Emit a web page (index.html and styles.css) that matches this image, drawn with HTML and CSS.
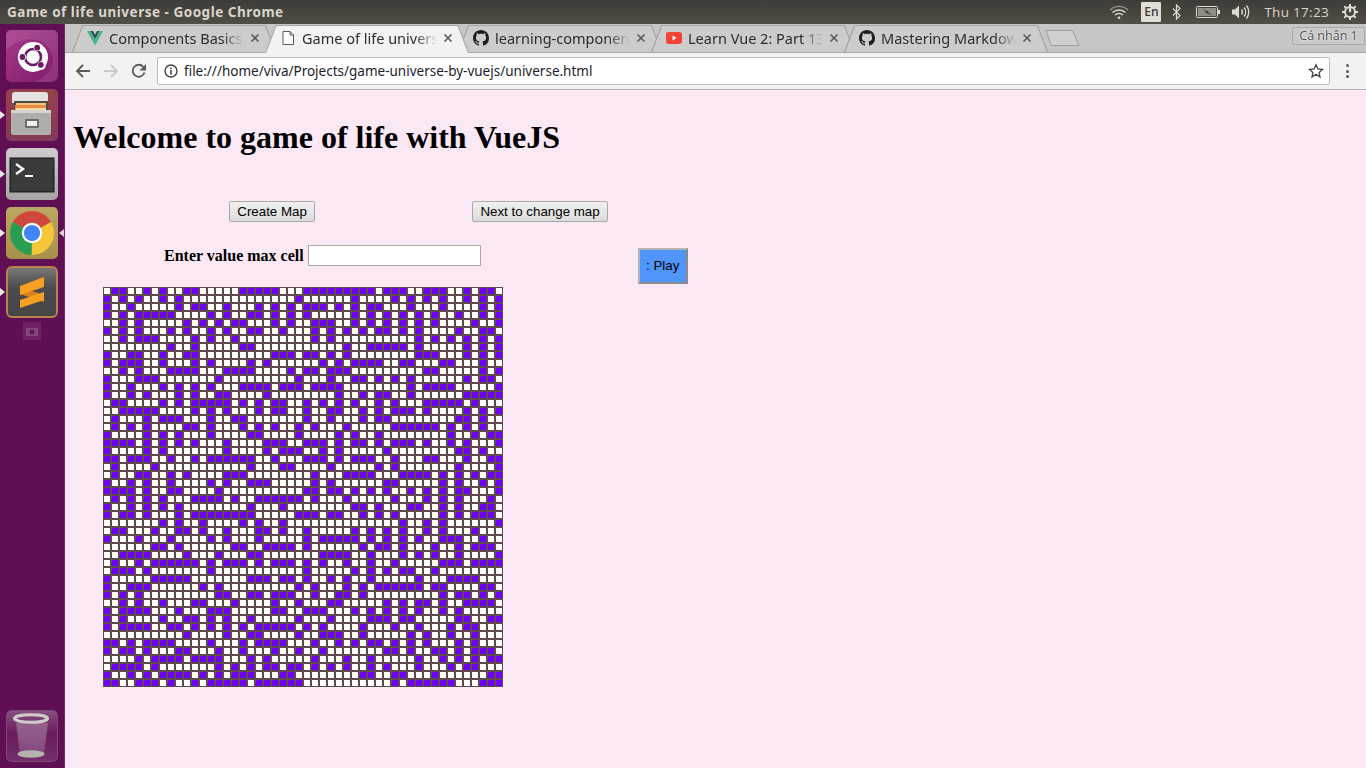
FILE: index.html
```html
<!DOCTYPE html>
<html lang="en">
<head>
<meta charset="utf-8">
<title>Game of life universe</title>
<link rel="stylesheet" href="styles.css">
</head>
<body>
<svg class="defs" width="0" height="0" aria-hidden="true">
  <symbol id="gh" viewBox="0 0 16 16"><path fill="#1b1f23" d="M8 0C3.58 0 0 3.58 0 8c0 3.54 2.29 6.53 5.47 7.59.4.07.55-.17.55-.38 0-.19-.01-.82-.01-1.49-2.01.37-2.53-.49-2.69-.94-.09-.23-.48-.94-.82-1.13-.28-.15-.68-.52-.01-.53.63-.01 1.08.58 1.23.82.72 1.21 1.87.87 2.33.66.07-.52.28-.87.51-1.07-1.78-.2-3.64-.89-3.64-3.95 0-.87.31-1.59.82-2.15-.08-.2-.36-1.02.08-2.12 0 0 .67-.21 2.2.82.64-.18 1.32-.27 2-.27.68 0 1.36.09 2 .27 1.53-1.04 2.2-.82 2.2-.82.44 1.1.16 1.92.08 2.12.51.56.82 1.27.82 2.15 0 3.07-1.87 3.75-3.65 3.95.29.25.54.73.54 1.48 0 1.07-.01 1.93-.01 2.2 0 .21.15.46.55.38A8.013 8.013 0 0 0 16 8c0-4.42-3.58-8-8-8z"/></symbol>
  <symbol id="x" viewBox="0 0 10 10"><path d="M1.5 1.5l7 7M8.500 1.500l-7 7" stroke="#5a5a5a" stroke-width="1.600" fill="none"/></symbol>
  <linearGradient id="tileUb" x1="0" y1="0" x2="1" y2="1"><stop offset="0" stop-color="#a53a8a"/><stop offset="1" stop-color="#801a6c"/></linearGradient>
  <linearGradient id="tileFi" x1="0" y1="0" x2="0" y2="1"><stop offset="0" stop-color="#96404f"/><stop offset="1" stop-color="#843a55"/></linearGradient>
  <linearGradient id="tileTe" x1="0" y1="0" x2="0" y2="1"><stop offset="0" stop-color="#d0ccce"/><stop offset="1" stop-color="#a8a3a6"/></linearGradient>
  <linearGradient id="tileCh" x1="0" y1="0" x2="0" y2="1"><stop offset="0" stop-color="#bda766"/><stop offset="1" stop-color="#a89048"/></linearGradient>
  <linearGradient id="tileSu" x1="0" y1="0" x2="0" y2="1"><stop offset="0" stop-color="#7c7a78"/><stop offset=".4" stop-color="#4c4c4c"/><stop offset="1" stop-color="#454545"/></linearGradient>
  <linearGradient id="tileTr" x1="0" y1="0" x2="0" y2="1"><stop offset="0" stop-color="#8a4f82"/><stop offset=".45" stop-color="#6a1a5e"/><stop offset="1" stop-color="#74306a"/></linearGradient>
  <linearGradient id="binBody" x1="0" y1="0" x2="0" y2="1"><stop offset="0" stop-color="#96608f"/><stop offset="1" stop-color="#80487a"/></linearGradient>
</svg>

<header class="topbar">
  <div class="wintitle">Game of life universe - Google Chrome</div>
  <div class="tray">
    <svg class="t-wifi" width="20" height="16" viewBox="0 0 20 16"><g fill="none" stroke="#dfdbd2" stroke-width="1.400"><path d="M1 6a13 13 0 0 1 18 0" opacity=".55"/><path d="M3.500 8.500a9.500 9.500 0 0 1 13 0"/><path d="M6 11a6 6 0 0 1 8 0"/></g><circle cx="10" cy="13.800" r="1.300" fill="#dfdbd2"/></svg>
    <span class="t-lang">En</span>
    <svg class="t-bt" width="10" height="16" viewBox="0 0 10 16"><path d="M1 4.500l7 7-3.500 3.500v-14l3.500 3.500-7 7" fill="none" stroke="#dfdbd2" stroke-width="1.200"/></svg>
    <svg class="t-bat" width="24" height="14" viewBox="0 0 24 14"><rect x=".5" y="1.500" width="21" height="11" rx="1" fill="none" stroke="#dfdbd2"/><rect x="2" y="3" width="18" height="8" fill="#8f8d85"/><rect x="22" y="5" width="2" height="4" fill="#dfdbd2"/><path d="M7 4l6 3 -1 0 4 3-7-2.500 1.500-.2z" fill="#33322e"/></svg>
    <svg class="t-vol" width="20" height="16" viewBox="0 0 20 16"><path d="M1 5.500h3l4-4v13l-4-4h-3z" fill="#dfdbd2"/><g fill="none" stroke="#dfdbd2" stroke-width="1.300"><path d="M10.500 5.500a4 4 0 0 1 0 5"/><path d="M13 3.500a7 7 0 0 1 0 9"/><path d="M15.500 1.500a10.500 10.500 0 0 1 0 13"/></g></svg>
    <span class="t-clock">Thu 17:23</span>
    <svg class="t-gear" width="16" height="16" viewBox="0 0 16 16"><g fill="none" stroke="#dfdbd2"><circle cx="8" cy="8" r="5" stroke-width="2"/><path stroke-width="2" d="M8 0v3M8 13v3M0 8h3M13 8h3M2.300 2.300l2 2M11.700 11.700l2 2M2.300 13.700l2-2M11.700 4.300l2-2"/></g><rect x="6.800" y="3" width="2.400" height="5" fill="#dfdbd2"/></svg>
  </div>
</header>

<div class="shell">
  <aside class="launcher">
    <div class="app open">
      <svg width="52" height="52" viewBox="0 0 52 52"><rect width="52" height="52" rx="5" fill="url(#tileUb)"/><path d="M0 20C16 4 40 6 46 24c4 14-6 24-18 28h16a8 8 0 0 0 8-8V5a5 5 0 0 0-5-5H5a5 5 0 0 0-5 5z" fill="#fff" opacity=".1"/><circle cx="27" cy="27" r="15" fill="#fff"/><circle cx="27" cy="27" r="8" fill="none" stroke="#6b1a64" stroke-width="2.600"/><g fill="#fff"><circle cx="31.500" cy="17" r="4.200"/><circle cx="16" cy="27" r="4.200"/><circle cx="35.500" cy="35.500" r="4.200"/></g><g fill="#6b1a64"><circle cx="31.200" cy="17.700" r="2.900"/><circle cx="16.500" cy="27" r="2.900"/><circle cx="34.800" cy="34.800" r="2.900"/></g></svg>
    </div>
    <div class="app run">
      <svg width="52" height="52" viewBox="0 0 52 52"><rect width="52" height="52" rx="5" fill="url(#tileFi)"/><path d="M6 6q0-3 3-3h30q3 0 3 3v8H6z" fill="#e4e2de"/><rect x="8" y="12" width="34" height="13" fill="#4c4a46"/><rect x="10" y="14" width="30" height="3" fill="#f6c27c"/><rect x="9" y="16" width="31" height="7" fill="#ec8a3c"/><rect x="10" y="19" width="30" height="2" fill="#f8d9a8"/><path d="M5 21h40v23q0 2-2 2H7q-2 0-2-2z" fill="#b0aeaa"/><rect x="5" y="21" width="40" height="3" fill="#d6d4d0"/><rect x="19" y="30" width="14" height="9" rx="1" fill="#6e6c68"/><rect x="21" y="32" width="10" height="5" fill="#f0efec"/></svg>
    </div>
    <div class="app run">
      <svg width="52" height="52" viewBox="0 0 52 52"><rect width="52" height="52" rx="5" fill="url(#tileTe)"/><rect x="4" y="10" width="44" height="34" fill="#2f2f2f" stroke="#1a1a1a"/><rect x="5" y="11" width="42" height="32" fill="#3a3c3a"/><path d="M10 16l7 5-7 5" fill="none" stroke="#fff" stroke-width="2.400"/><rect x="19" y="27" width="8" height="2" fill="#fff"/></svg>
    </div>
    <div class="app run focus">
      <svg width="52" height="52" viewBox="0 0 52 52"><rect width="52" height="52" rx="5" fill="url(#tileCh)"/><path d="M26 26L7 15A22 22 0 0 1 45 15Z" fill="#d0473c"/><path d="M26 26L45 15A22 22 0 0 1 25.500 48Z" fill="#f5c63a"/><path d="M26 26L25.500 48A22 22 0 0 1 7 15Z" fill="#2a9d55"/><circle cx="26" cy="26" r="10.200" fill="#fff"/><circle cx="26" cy="26" r="8.100" fill="#4285f4"/></svg>
    </div>
    <div class="app run">
      <svg width="52" height="52" viewBox="0 0 52 52"><rect x="1" y="1" width="50" height="50" rx="5" fill="url(#tileSu)" stroke="#b9834f" stroke-width="2"/><polygon points="14,21 38,29 38,36 14,28" fill="#d9831c"/><polygon points="14,20 38,11 38,21 14,29" fill="#f5a022"/><polygon points="38,26 14,34 14,42 38,34" fill="#f5a022"/></svg>
    </div>
    <div class="minicam">
      <svg width="18" height="18" viewBox="0 0 18 18"><rect width="18" height="18" fill="#7c3170"/><rect x="3" y="6" width="12" height="8" fill="#a5719d"/><circle cx="9" cy="10" r="2.500" fill="#5e1c54"/></svg>
    </div>
    <div class="app trash">
      <svg width="52" height="52" viewBox="0 0 52 52"><rect x=".5" y=".5" width="51" height="51" rx="5" fill="url(#tileTr)" stroke="#7d4a76"/><path d="M10 13h32l-4 31q-1 2-12 2t-12-2z" fill="url(#binBody)"/><ellipse cx="25" cy="44" rx="13.500" ry="3.800" fill="#b5b3b0"/><ellipse cx="25" cy="8.500" rx="16.500" ry="3.800" fill="none" stroke="#cfcdca" stroke-width="3"/></svg>
    </div>
  </aside>

  <div class="browser">
    <nav class="tabstrip">
      <div class="tab">
        <svg class="fav" width="16" height="15" viewBox="0 0 16 15"><path d="M0 0h3.500L8 8l4.500-8H16L8 14.500z" fill="#41b883"/><path d="M3.500 0H6l2 3.800L10 0h2.500L8 8z" fill="#34495e"/></svg>
        <span class="tab-title">Components Basics</span>
        <svg class="close" width="10" height="10"><use href="#x"/></svg>
      </div>
      <div class="tab active">
        <svg class="fav" width="16" height="16" viewBox="0 0 16 16"><path d="M3 1.500h7l3.500 3.500v9.500H3zM10 1.500V5h3.500" fill="#fff" stroke="#5a5a5a"/></svg>
        <span class="tab-title">Game of life univers</span>
        <svg class="close" width="10" height="10"><use href="#x"/></svg>
      </div>
      <div class="tab">
        <svg class="fav" width="16" height="16"><use href="#gh"/></svg>
        <span class="tab-title">learning-componen</span>
        <svg class="close" width="10" height="10"><use href="#x"/></svg>
      </div>
      <div class="tab">
        <svg class="fav" width="16" height="16" viewBox="0 0 16 16"><rect y="2" width="16" height="12" rx="3" fill="#f44336"/><path d="M6.500 5.500v5l4-2.500z" fill="#fff"/></svg>
        <span class="tab-title">Learn Vue 2: Part 13</span>
        <svg class="close" width="10" height="10"><use href="#x"/></svg>
      </div>
      <div class="tab">
        <svg class="fav" width="16" height="16"><use href="#gh"/></svg>
        <span class="tab-title">Mastering Markdow</span>
        <svg class="close" width="10" height="10"><use href="#x"/></svg>
      </div>
      <svg class="newtab" width="36" height="18" viewBox="0 0 36 18"><path d="M1 1.500h26.500L34 16.500H6z" fill="#cfcfcf" stroke="#9d9d9d"/></svg>
      <div class="profile">Cá nhân 1</div>
    </nav>

    <div class="toolbar">
      <svg class="tool" width="16" height="16" viewBox="0 0 16 16"><path d="M15 8H2M8 2L2 8l6 6" fill="none" stroke="#5a5a5a" stroke-width="1.800"/></svg>
      <svg class="tool" width="16" height="16" viewBox="0 0 16 16"><path d="M1 8h13M8 2l6 6-6 6" fill="none" stroke="#c9c9c9" stroke-width="1.800"/></svg>
      <svg class="tool" width="16" height="16" viewBox="0 0 16 16"><path d="M13.500 9.500A6 6 0 1 1 12.300 3.800" fill="none" stroke="#5a5a5a" stroke-width="1.800"/><path d="M15 1v6.500H8.500z" fill="#5a5a5a"/></svg>
      <div class="omnibox">
        <svg class="info" width="14" height="14" viewBox="0 0 14 14"><circle cx="7" cy="7" r="6" fill="none" stroke="#444" stroke-width="1.400"/><rect x="6.200" y="6" width="1.600" height="4.500" fill="#444"/><rect x="6.200" y="3.500" width="1.600" height="1.600" fill="#444"/></svg>
        <span class="url">file:///home/viva/Projects/game-universe-by-vuejs/universe.html</span>
        <svg class="star" width="16" height="16" viewBox="0 0 16 16"><path d="M8 1.800l1.900 4.200 4.600.5-3.400 3.100.9 4.500L8 11.300l-4 2.800.9-4.500L1.500 6.500l4.600-.5z" fill="none" stroke="#444" stroke-width="1.300"/></svg>
      </div>
      <div class="dots"><i></i><i></i><i></i></div>
    </div>

    <main class="page">
      <h1 class="heading">Welcome to game of life with VueJS</h1>
      <div class="map-actions">
        <button class="btn" type="button">Create Map</button>
        <button class="btn" type="button">Next to change map</button>
      </div>
      <div class="controls">
        <label class="maxcell">Enter value max cell <input class="maxinput" type="text"></label>
        <button class="play" type="button">: Play</button>
      </div>
      <div class="universe" id="universe"></div>
    </main>
  </div>
</div>
<script src="app.js"></script>
</body>
</html>
```
FILE: styles.css
```css
* { box-sizing: border-box; }
html, body { margin: 0; padding: 0; height: 100%; overflow: hidden; }
body { font-family: "Open Sans", "Noto Sans", sans-serif; background: #fbe8f5; width: 1366px; height: 768px; display: flex; flex-direction: column; }
.defs { position: absolute; }

.topbar { height: 24px; flex: none; display: flex; align-items: center; justify-content: space-between; background: linear-gradient(#3d3c37, #504e44); color: #d8d5cc; }
.wintitle { margin-left: 7px; font-family: "Noto Sans", sans-serif; font-weight: 700; font-size: 13.500px; letter-spacing: .51px; white-space: nowrap; }
.tray { display: flex; align-items: center; height: 24px; padding-right: 8px; }
.t-lang { width: 20px; height: 20px; margin-left: 12px; background: #e2ded5; color: #3c3b37; font-size: 12px; font-weight: 600; text-align: center; line-height: 20px; border-radius: 1px; }
.t-bt { margin-left: 11px; }
.t-bat { margin-left: 14px; }
.t-vol { margin-left: 11px; }
.t-clock { margin-left: 13px; font-size: 13.500px; color: #d8d5cc; letter-spacing: .3px; white-space: nowrap; }
.t-gear { margin-left: 13px; }

.shell { flex: 1; display: flex; min-height: 0; }
.launcher { width: 65px; flex: none; background: #610f54; display: flex; flex-direction: column; align-items: flex-start; padding: 6px 0 6px 6px; gap: 7px; border-right: 1px solid #6f2a63; }
.app { position: relative; width: 52px; height: 52px; flex: none; line-height: 0; }
.app.run::before { content: ""; position: absolute; left: -6px; top: 22px; border: 4px solid transparent; border-left: 5px solid #e9e9e9; border-right: 0; }
.app.focus::after { content: ""; position: absolute; right: -6px; top: 22px; border: 4px solid transparent; border-right: 5px solid #d9d2d6; border-left: 0; }
.minicam { margin: -3px 0 0 17px; line-height: 0; opacity: .55; }
.trash { margin-top: auto; }

.browser { flex: 1; min-width: 0; display: flex; flex-direction: column; }
.tabstrip { height: 29px; flex: none; display: flex; align-items: flex-end; background: #c6c6c6; border-bottom: 1px solid #a6a6a6; padding-left: 7px; position: relative; }
.tab { position: relative; z-index: 0; width: 203px; height: 28px; margin-right: -10px; margin-bottom: -1px; flex: none; display: flex; align-items: center; padding: 0 15px 2px 15px; color: #2d2d2d; font-family: "Noto Sans", sans-serif; font-size: 14.500px; }
.tab::before, .tab::after { content: ""; position: absolute; z-index: -1; top: 0; bottom: 1px; background: #cccccc; border-top: 1px solid #a6a6a6; }
.tab::before { left: 0; right: 50%; transform-origin: bottom left; transform: skewX(-21deg); border-left: 1px solid #9a9a9a; }
.tab::after { left: 50%; right: 0; transform-origin: bottom right; transform: skewX(21deg); border-right: 1px solid #9a9a9a; }
.tab.active { z-index: 2; }
.tab.active::before, .tab.active::after { background: #f2f2f2; bottom: 0; }
.fav { flex: none; margin-right: 6px; }
.tab-title { flex: 1; min-width: 0; overflow: hidden; white-space: nowrap; -webkit-mask-image: linear-gradient(to right, #000 84%, transparent 100%); mask-image: linear-gradient(to right, #000 84%, transparent 100%); }
.close { flex: none; margin-left: 6px; }
.newtab { flex: none; margin: 0 0 5px 8px; }
.profile { margin: 0 1px 7px auto; width: 73px; height: 18px; background: #c9c9c9; border: 1px solid #a9a9a9; border-radius: 2px; font-size: 12.500px; line-height: 16px; text-align: center; color: #4a4a4a; text-shadow: 0 0 2px #fff, 0 0 1px #fff; white-space: nowrap; }

.toolbar { height: 37px; flex: none; display: flex; align-items: center; background: #f2f2f2; border-bottom: 1px solid #b4b4b4; padding-left: 10px; gap: 12px; }
.tool { flex: none; }
.omnibox { width: 1173px; height: 28px; margin-left: -2px; display: flex; align-items: center; background: #fff; border: 1px solid #bcbcbc; border-radius: 2px; padding: 0 5px 0 6px; flex: none; }
.info { flex: none; margin-right: 6px; margin-left: 0; }
.url { flex: 1; margin-bottom: 1px; font-family: "Noto Sans", sans-serif; font-size: 13.500px; color: #1c1c2c; white-space: nowrap; }
.star { flex: none; }
.dots { display: flex; flex-direction: column; gap: 2.500px; margin-left: 4px; }
.dots i { display: block; width: 3px; height: 3px; background: #5a5a5a; border-radius: 50%; }

.page { flex: 1; background: #fbe8f5; padding: 29px 8px 0; min-height: 0; color: #000; font-family: "Liberation Serif", serif; }
.heading { margin: 0 0 45px; font-size: 32px; line-height: 37px; font-weight: 700; }
.map-actions { display: flex; gap: 157px; padding-left: 156px; }
.btn { font: 13.333px "Liberation Sans", sans-serif; height: 21px; padding: 1px 7.250px; color: #000; background: linear-gradient(#f0f0f0, #dcdcdc); border: 1px solid #a9a9a9; border-radius: 2px; }
.controls { display: flex; align-items: flex-start; margin: 23px 0 0 91px; }
.maxcell { display: flex; align-items: center; font-size: 16px; font-weight: 700; white-space: pre; }
.maxinput { width: 173px; height: 21px; margin: 0; padding: 1px 2px; background: #fff; border: 1px solid #a9a9a9; }
.play { width: 50px; height: 36px; margin: 3px 0 0 157px; padding: 0 0 2px; font: 13.333px "Liberation Sans", sans-serif; color: #000; background: #5096fa; border: 2px solid; border-color: #b5b5b5 #8a8a8a #8a8a8a #b5b5b5; }
.universe { display: grid; grid-template-columns: repeat(50, 8px); grid-auto-rows: 8px; width: 400px; margin: 3px 0 0 30px; }
.cell { width: 8px; height: 8px; background: #fff; border: 1px solid #5f4b4b; }
.cell.on { background: #7000ff; }
```
FILE: app.js
```js
// Live cells per row: [columns 0-24, columns 25-49 (offset from 25)]
var ROWS = [
[[1,2,5,7,10,11,17,18,19,20,21],[0,1,2,3,4,5,6,7,8,10,11,12,15,16,17,20,22,23]],
[[0,2,4,7,9,24],[6,11,13,15,17,20,22,24]],
[[0,3,9,11,12,15,19,21,23],[0,1,2,4,6,8,9,13,17,22,24]],
[[0,2,4,5,6,7,8,13,15,18,19,21,23],[0,6,8,10,12,14,16,19,22,24]],
[[2,4,10,12,14,16,17,21,23],[1,2,3,6,8,10,12,14,16,21,24]],
[[0,2,4,8,10,13,15,18,19,22],[1,3,5,7,9,10,12,14,19,22,23]],
[[2,4,5,6,11,13,16],[1,3,14,16,18,20,22,24]],
[[8,11,17,18],[5,8,9,10,11,12,14,20,22,24]],
[[0,3,4,7,10,11,21,22,23],[0,1,3,5,14,15,16,20,22,24]],
[[0,2,3,4,7,11,13,18,20],[2,4,6,7,8,9,12,13,17,18,22]],
[[2,4,8,9,10,11,15,16,17,18,23],[0,1,3,4,5,15,16,22,24]],
[[0,4,5,6,14,24],[3,6,7,9,11,13,20,22,23]],
[[0,3,7,9,11,13,17,18,19,20,22,23,24],[1,2,3,4,13,15,16,17,18,24]],
[[0,3,5,9,11,14,15,20],[4,7,9,10,13,20,21,22,23,24]],
[[1,2,7,9,11,12,13,14,15,17,19,21,22],[0,2,4,6,9,11,15,16,17,18,19,21]],
[[2,3,4,5,6,11,13,15,19,21,22],[0,3,4,7,9,11,12,13,15,20,22,24]],
[[1,5,7,8,9,13,16,17],[0,3,7,9,10,19,20,22]],
[[1,3,5,10,11,13,17,19,21,24],[1,5,11,12,13,14,15,16,18,20,22]],
[[0,5,7,9,13,18,19,24],[4,6,9,18,21,23,24]],
[[0,1,2,3,5,7,9,11,15,20,21,22],[0,1,2,4,6,7,9,11,12,13,15,18,20,24]],
[[0,5,7,15,20,22,23,24],[2,4,10,19,20,22]],
[[0,1,3,4,5,8,11,13,14,15,16,17,18,21],[0,1,2,4,6,7,8,11,15,16,20,23,24]],
[[1,6,18,22,23],[3,9,11,19,24]],
[[1,4,5,8,10,15,16,17],[1,5,6,7,8,12,13,14,15,17,19,21,23,24]],
[[0,3,5,8,13,15,18,19,20],[1,3,10,11,17,19,22,24]],
[[0,1,2,3,5,8,9,14],[0,1,3,4,6,8,10,13,15,17,19,20,24]],
[[1,3,5,7,11,12,13,14,16,19,20,21,22,23,24],[1,5,11,15,17,19,23]],
[[0,3,5,7,9,18,22],[6,7,9,13,14,17,19,22,23]],
[[0,2,3,5,9,11,12,13,14,15,16,17,18,24],[0,1,3,4,7,9,11,17,19,21,22,23]],
[[7,9,12,17,19,22],[12,15,17,24]],
[[1,2,6,9,10,12,15,19,20,22],[0,6,8,10,12,15,17,21]],
[[0,4,8,13,15,19],[0,2,3,4,5,6,8,10,12,14,17,18,19,22]],
[[6,7,9,16,17,20,21,22,23],[0,7,9,10,12,16,19,21,22,23]],
[[2,3,4,5,10,14,18,19],[2,3,4,5,8,12,14,16,19,24]],
[[1,4,6,7,8,9,10,11,13,15,16,17,19,21,22,23],[0,2,5,8,11,17,18,19,21,22,23,24]],
[[1,2,3,5,13],[0,6,8,10,12,13,16]],
[[0,6,7,8,9,10,18,19,20,22,23],[0,3,5,8,14,18,19,20,21]],
[[0,3,4,5,12,14,24],[1,5,7,9,10,11,12,13,14,16,17,22,23]],
[[0,2,4,14,15,18,19,21,22,23],[1,4,5,7,17,19,20,22,24]],
[[2,4,7,11,12,16,21,24],[3,4,10,12,14,15,17,20,21,22,23]],
[[0,2,3,4,5,9,13,14,15,21,22],[0,1,2,6,8,10,12,14,17,19]],
[[0,2,7,10,11,13,15,18,24],[3,8,9,10,12,13,19,20,23,24]],
[[0,2,3,4,5,8,9,11,13,15,17,19,20,21,22,23],[0,2,7,11,14,18,20,21]],
[[10,15,18,19,24],[2,3,4,7,13,15,18,21]],
[[0,1,3,5,6,7,8,13,17,19,20,21,22],[1,4,6,8,9,11,13,15,19,21]],
[[0,2,3,5,9,10,14,17,21,24],[2,10,11,13,16,17,19,21,22,23]],
[[4,6,7,8,9,11,12,13,14,18,20],[1,5,8,14,17,19,21,23,24]],
[[1,2,3,4,6,14,16,18,20,21,23,24],[1,3,5,8,10,14,18,20,21]],
[[0,3,5,7,8,9,10,12,14,16,17,18,22,23],[7,8,11,12,16,23,24]],
[[0,1,4,5,6,8,11,13,14,15,16,17,19,20,21,22,23,24],[11,13,14,15,16,17,18,22,23,24]]
];

var universe = document.getElementById("universe");
var fragment = document.createDocumentFragment();
ROWS.forEach(function (row) {
  for (var col = 0; col < 50; col++) {
    var cell = document.createElement("div");
    var live = col < 25 ? row[0].indexOf(col) >= 0 : row[1].indexOf(col - 25) >= 0;
    cell.className = live ? "cell on" : "cell";
    fragment.appendChild(cell);
  }
});
universe.appendChild(fragment);
```
